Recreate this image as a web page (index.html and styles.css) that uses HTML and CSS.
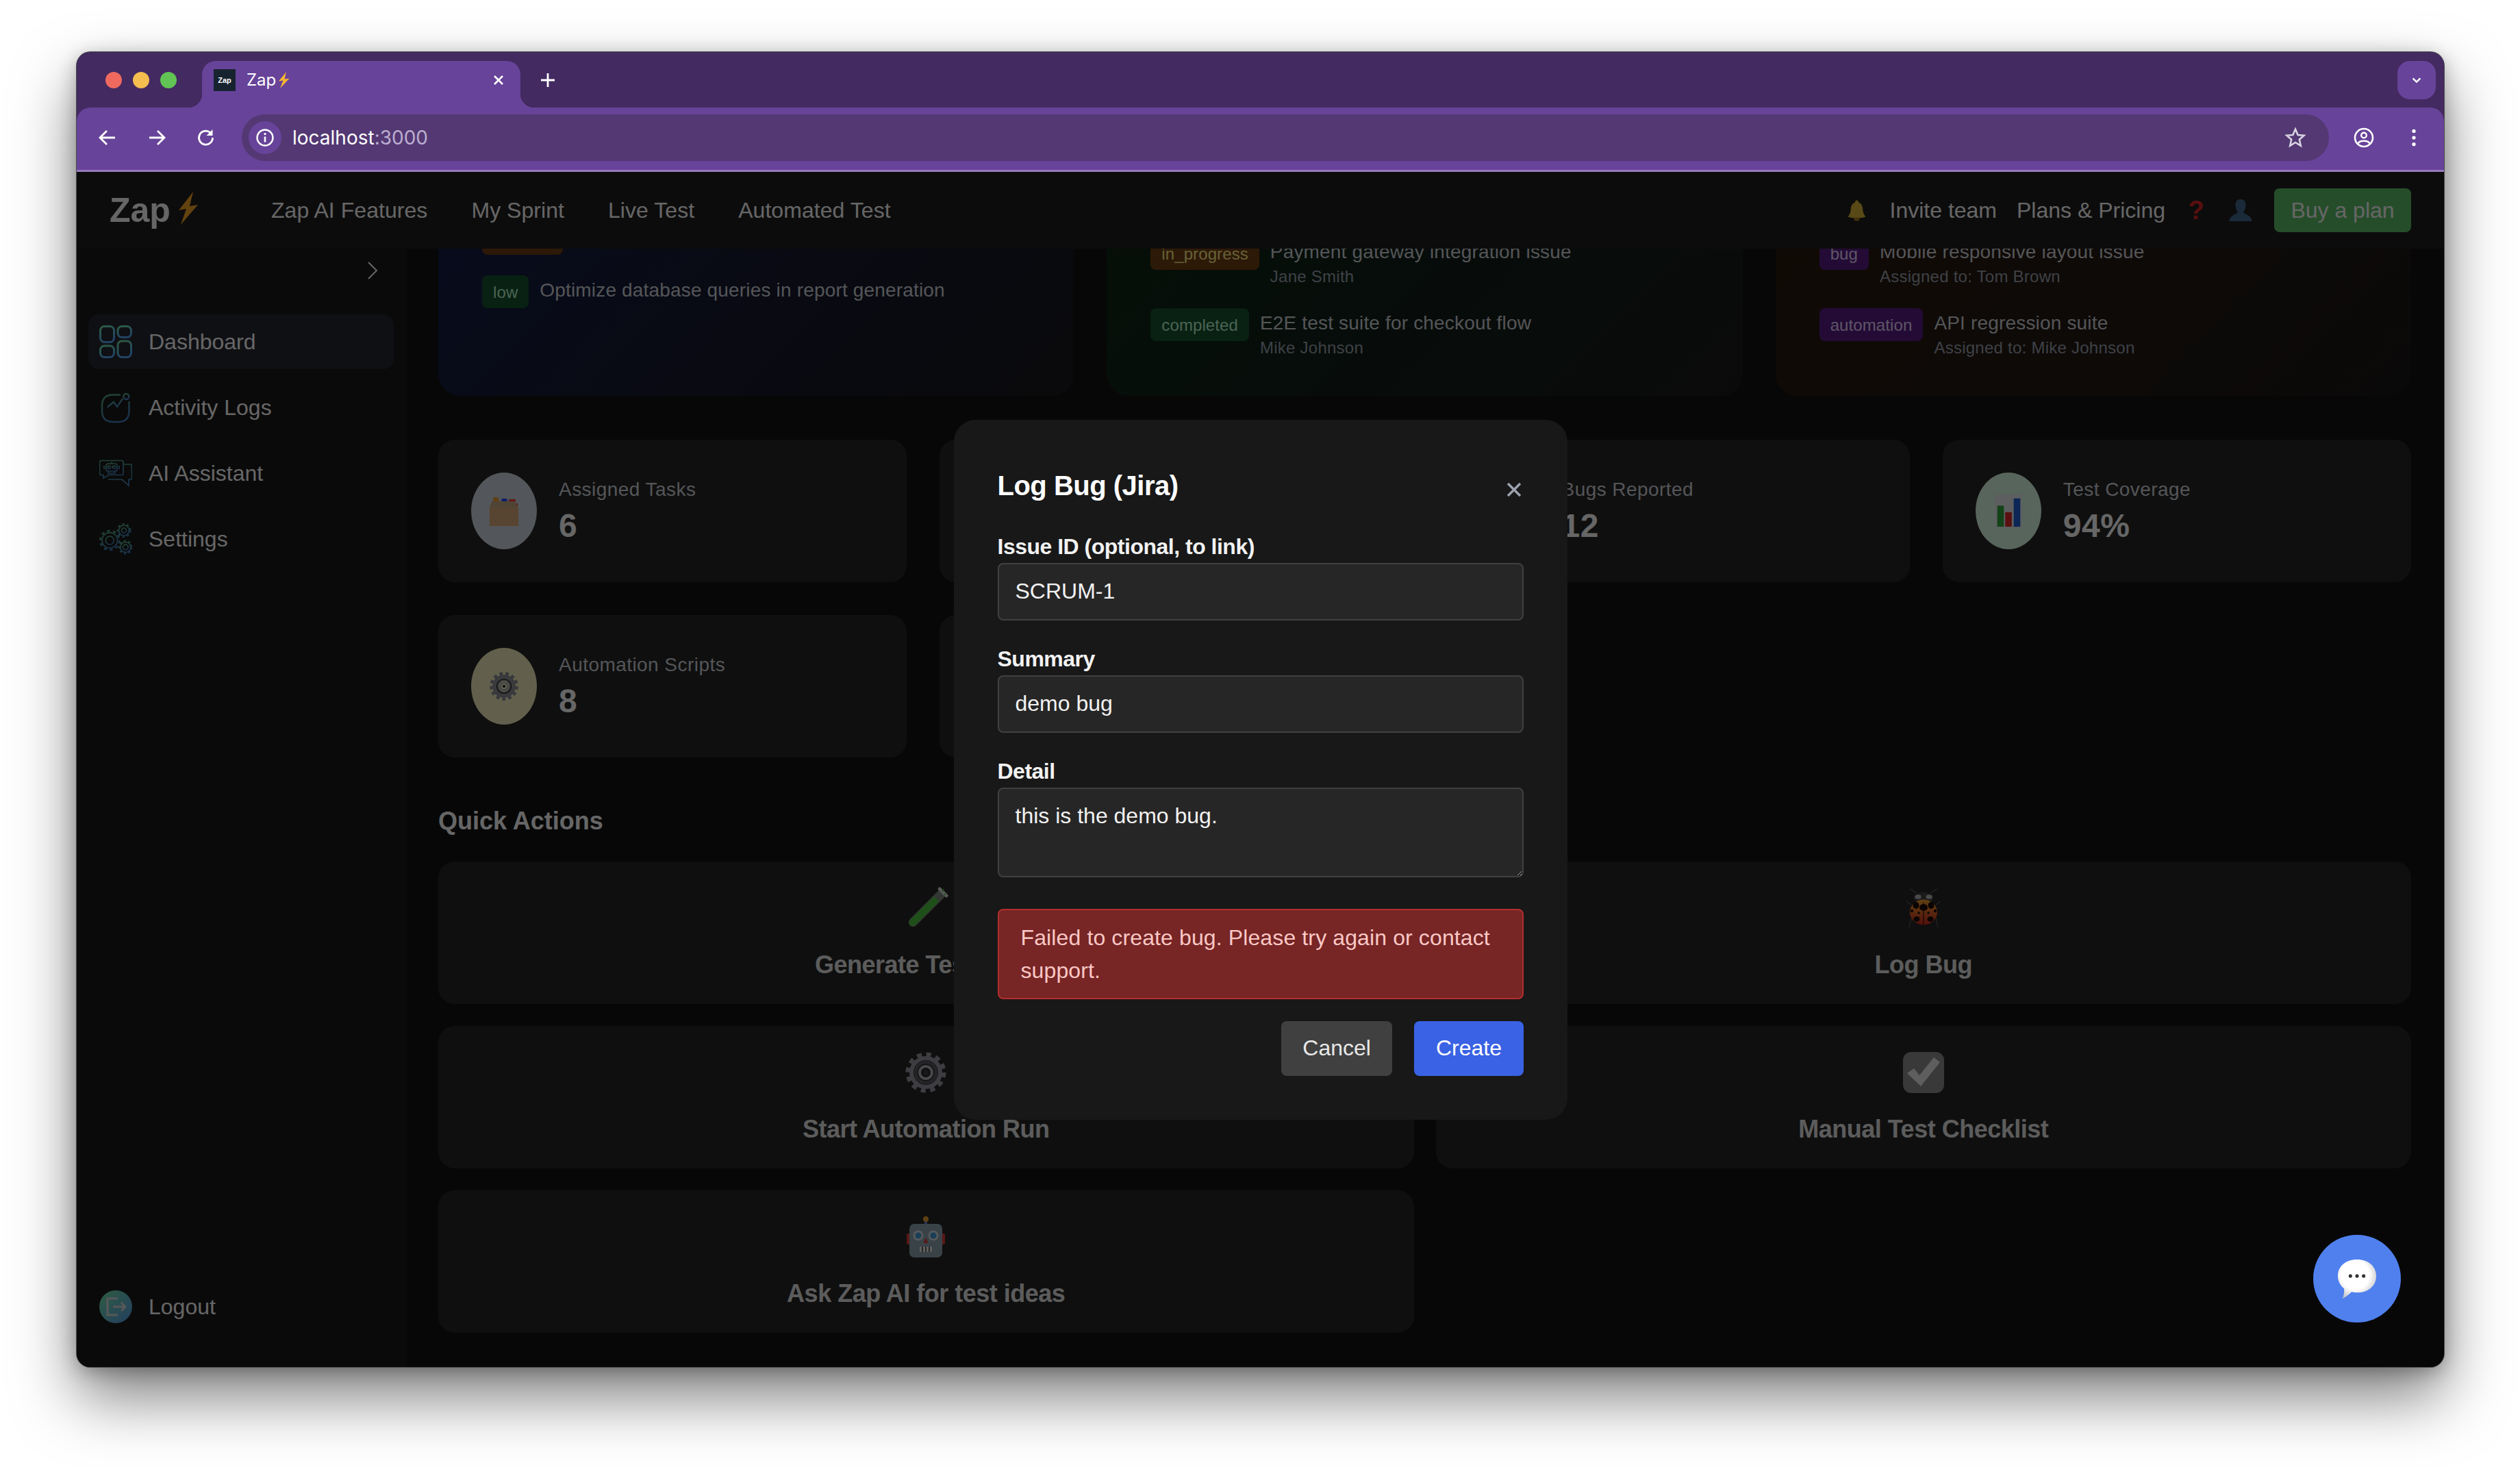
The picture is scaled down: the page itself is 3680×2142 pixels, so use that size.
FILE: index.html
```html
<!DOCTYPE html>
<html lang="en">
<head>
<meta charset="utf-8">
<title>Zap</title>
<link rel="stylesheet" href="styles.css">
</head>
<body>
<svg class="defs" width="0" height="0" aria-hidden="true">
  <defs>
    <linearGradient id="side" x1="0" y1="0" x2="0.4" y2="1">
      <stop offset="0" stop-color="#72e6a6"/>
      <stop offset="1" stop-color="#55a8fa"/>
    </linearGradient>
    <linearGradient id="bugbody" x1="0" y1="0" x2="0" y2="1">
      <stop offset="0" stop-color="#f0a030"/>
      <stop offset="1" stop-color="#d0281c"/>
    </linearGradient>
    <radialGradient id="bubble" cx="0.45" cy="0.4" r="0.62">
      <stop offset="0.6" stop-color="#ffffff"/>
      <stop offset="1" stop-color="#c4c4c8"/>
    </radialGradient>
    <linearGradient id="logoutg" x1="0" y1="0" x2="1" y2="1">
      <stop offset="0" stop-color="#72e6a6"/>
      <stop offset="1" stop-color="#5a9cf0"/>
    </linearGradient>
  </defs>
</svg>
<div class="window">
  <div class="tabstrip">
    <div class="lights">
      <span class="light light-red"></span>
      <span class="light light-yellow"></span>
      <span class="light light-green"></span>
    </div>
    <div class="tab">
      <span class="favicon">Zap</span>
      <span class="tab-title">Zap<svg class="tab-bolt" viewBox="0 0 34 48"><polygon points="24,0 2,27 15,25 6,48 33,19 19,21" fill="#f7b733"/></svg></span>
      <svg class="tab-close" viewBox="0 0 20 20"><path d="M4 4 L16 16 M16 4 L4 16" stroke="#fff" stroke-width="2.6"/></svg>
    </div>
    <svg class="tab-new" viewBox="0 0 24 24"><path d="M12 2 V22 M2 12 H22" stroke="#fff" stroke-width="2.8"/></svg>
    <div class="tab-search"><svg viewBox="0 0 20 20"><path d="M4 7 L10 13 L16 7" fill="none" stroke="#fff" stroke-width="2.6"/></svg></div>
  </div>
  <div class="toolbar">
    <svg class="tool" viewBox="0 0 32 32"><path d="M27 16 H6 M15 6 L5 16 L15 26" fill="none" stroke="#fff" stroke-width="2.8"/></svg>
    <svg class="tool" viewBox="0 0 32 32"><path d="M5 16 H26 M17 6 L27 16 L17 26" fill="none" stroke="#fff" stroke-width="2.8"/></svg>
    <svg class="tool" viewBox="0 0 32 32"><path d="M25.5 16 A10 10 0 1 1 22 8.5" fill="none" stroke="#fff" stroke-width="2.8"/><polygon points="25.5,4 25.5,13 16.5,13" fill="#fff"/></svg>
    <div class="omnibox">
      <span class="info"><svg viewBox="0 0 28 28"><circle cx="14" cy="14" r="11.5" fill="none" stroke="#fff" stroke-width="2.4"/><path d="M14 12.5 V20.5" stroke="#fff" stroke-width="2.6"/><circle cx="14" cy="8.6" r="1.7" fill="#fff"/></svg></span>
      <span class="url">localhost<span class="url-port">:3000</span></span>
      <svg class="star" viewBox="0 0 32 32"><polygon points="16,3.5 19.6,12 28.6,12.8 21.8,18.8 23.8,27.8 16,23 8.2,27.8 10.2,18.8 3.4,12.8 12.4,12" fill="none" stroke="#d9d3e2" stroke-width="2.6"/></svg>
    </div>
    <svg class="profile" viewBox="0 0 32 32"><circle cx="16" cy="16" r="13" fill="none" stroke="#fff" stroke-width="2.6"/><circle cx="16" cy="12.5" r="3.8" fill="none" stroke="#fff" stroke-width="2.4"/><path d="M7.5 24.5 C10 19.5 22 19.5 24.5 24.5" fill="none" stroke="#fff" stroke-width="2.6"/></svg>
    <svg class="kebab" viewBox="0 0 8 32"><circle cx="4" cy="5" r="3" fill="#fff"/><circle cx="4" cy="16" r="3" fill="#fff"/><circle cx="4" cy="27" r="3" fill="#fff"/></svg>
  </div>

  <div class="app">
    <header class="appnav">
      <div class="logo">Zap<svg class="logo-bolt" viewBox="0 0 34 48"><polygon points="25,0 4,27 15,25 7,48 32,19 20,21" fill="#f5a524"/></svg></div>
      <nav class="links">
        <a>Zap AI Features</a>
        <a>My Sprint</a>
        <a>Live Test</a>
        <a>Automated Test</a>
      </nav>
      <div class="nav-right">
        <svg class="bell" viewBox="0 0 32 32"><path d="M16 1.5 C18 1.5 18.6 3 18.5 4.5 C23 6 24.5 10 24.8 15 C25 20 27 23 29 25.500 C24 28 8 28 3 25.500 C5 23 7 20 7.2 15 C7.5 10 9 6 13.5 4.5 C13.4 3 14 1.5 16 1.5 Z" fill="#dcb738"/><ellipse cx="16" cy="29" rx="4" ry="2.6" fill="#a97a1c"/></svg>
        <a>Invite team</a>
        <a class="plans">Plans &amp; Pricing</a>
        <span class="help">?</span>
        <svg class="person" viewBox="0 0 34 32"><path d="M17 0 C23 0 25 5 24.5 10 C24 15 22 17 21 19 C23 22 33 23 33.5 32 H0.5 C1 23 11 22 13 19 C12 17 10 15 9.5 10 C9 5 11 0 17 0 Z" fill="#44698e"/></svg>
        <button class="buy">Buy a plan</button>
      </div>
    </header>

    <div class="body">
      <aside class="sidebar">
        <div class="collapse"><svg viewBox="0 0 16 26"><path d="M2 1 L14 13 L2 25" fill="none" stroke="#fff" stroke-width="2"/></svg></div>
        <ul class="menu">
          <li class="item item-active">
            <svg class="side-icon" viewBox="0 0 48 48"><g fill="none" stroke="url(#side)" stroke-width="3"><rect x="1.5" y="1.5" width="20" height="23" rx="6"/><rect x="27" y="1.5" width="19.5" height="16" rx="6"/><rect x="1.5" y="30" width="20" height="16.5" rx="6"/><rect x="27" y="23" width="19.5" height="23.5" rx="6"/></g></svg>
            <span>Dashboard</span>
          </li>
          <li class="item">
            <svg class="side-icon side-dim" viewBox="0 0 48 48"><g fill="none" stroke="url(#side)" stroke-width="2.4" stroke-linecap="round"><path d="M30 5.5 H20 C9 5.5 4 11 4 21 V29 C4 40 10 45 20 45 H28 C39 45 43.5 39 43.5 29 V16"/><circle cx="39.3" cy="8" r="4"/><path d="M12.5 23 L21 16 L26 23 L33.5 12"/></g></svg>
            <span>Activity Logs</span>
          </li>
          <li class="item">
            <svg class="side-icon side-dim" viewBox="0 0 48 48"><g fill="none" stroke="url(#side)" stroke-width="1.7"><path d="M3 5.5 H33 C34.5 5.5 35 6.5 35 8 V24 C35 25.5 34.5 26.5 33 26.5 H14 L6 31 V26.5 H2.5 C1 26.5 0.5 25.5 0.5 24 V8 C0.5 6.5 1 5.5 3 5.5 Z"/><path d="M35 11 H46 C47 11 47.5 12 47.5 13 V31 C47.5 32 47 33 46 33 H43 V42 L33 33 H13"/><rect x="10" y="10" width="16" height="11" rx="3"/><circle cx="14.5" cy="15" r="2"/><circle cx="21.5" cy="15" r="2"/><path d="M18 7.5 V10 M7 13 V18 M29 13 V18 M13 21 V24 H23 V21"/></g></svg>
            <span>AI Assistant</span>
          </li>
          <li class="item">
            <svg class="side-icon side-dim" viewBox="0 0 48 48"><g fill="none" stroke="url(#side)" stroke-width="1.7"><circle cx="15.3" cy="26" r="6"/><circle cx="15.3" cy="26" r="11.3"/><circle cx="15.3" cy="26" r="14" stroke-dasharray="4.2 4.6" stroke-width="2.6"/><circle cx="36" cy="11.5" r="3.5"/><circle cx="36" cy="11.5" r="7.5"/><circle cx="36" cy="11.5" r="9.4" stroke-dasharray="3.2 3.7" stroke-width="2.2"/><circle cx="38.3" cy="36" r="3.8"/><circle cx="38.3" cy="36" r="7.5"/><circle cx="38.3" cy="36" r="9.4" stroke-dasharray="3.2 3.7" stroke-width="2.2"/></g></svg>
            <span>Settings</span>
          </li>
        </ul>
        <div class="item item-logout">
          <svg class="side-icon" viewBox="0 0 48 48"><circle cx="24" cy="24" r="24" fill="url(#logoutg)"/><path d="M27 12 H12 V36 H27 M20 24 H38 M32 18 L38 24 L32 30" fill="none" stroke="#ddd" stroke-width="3"/></svg>
          <span>Logout</span>
        </div>
      </aside>

      <main class="main">
        <div class="scrolled">
          <section class="panels">
            <div class="panel panel-blue">
              <div class="task"><span class="badge badge-yellow">medium</span><div class="task-text"><p class="task-title">Add export to PDF option</p></div></div>
              <div class="task"><span class="badge badge-green">low</span><div class="task-text"><p class="task-title">Optimize database queries in report generation</p></div></div>
            </div>
            <div class="panel panel-green">
              <div class="task"><span class="badge badge-yellow">in_progress</span><div class="task-text"><p class="task-title">Payment gateway integration issue</p><p class="task-sub">Jane Smith</p></div></div>
              <div class="task"><span class="badge badge-green">completed</span><div class="task-text"><p class="task-title">E2E test suite for checkout flow</p><p class="task-sub">Mike Johnson</p></div></div>
            </div>
            <div class="panel panel-orange">
              <div class="task"><span class="badge badge-purple">bug</span><div class="task-text"><p class="task-title">Mobile responsive layout issue</p><p class="task-sub">Assigned to: Tom Brown</p></div></div>
              <div class="task"><span class="badge badge-purple">automation</span><div class="task-text"><p class="task-title">API regression suite</p><p class="task-sub">Assigned to: Mike Johnson</p></div></div>
            </div>
          </section>

          <section class="stats">
            <div class="stat">
              <span class="stat-icon stat-gray">
                <svg class="stat-svg" viewBox="0 0 44 44"><rect x="6" y="2" width="8" height="6" rx="2" fill="#f0a030"/><rect x="5" y="7" width="11" height="6" rx="2" fill="#f0a030"/><rect x="18" y="4" width="9" height="4" rx="2" fill="#2a4cff"/><rect x="18" y="10" width="9" height="4" rx="2" fill="#2a4cff"/><rect x="29" y="5" width="10" height="4" rx="1" fill="#ff3a3a"/><rect x="31" y="11" width="11" height="4" rx="1" fill="#ff3a3a"/><polygon points="4,8 38,8 43,18 1,18" fill="#c9ab86"/><rect x="1" y="17" width="42" height="27" fill="#d9ad7c"/></svg>
              </span>
              <div><p class="stat-label">Assigned Tasks</p><p class="stat-value">6</p></div>
            </div>
            <div class="stat"></div>
            <div class="stat">
              <span class="stat-icon stat-red"></span>
              <div><p class="stat-label">Bugs Reported</p><p class="stat-value">12</p></div>
            </div>
            <div class="stat">
              <span class="stat-icon stat-green">
                <svg class="stat-svg" viewBox="0 0 44 50"><rect x="2" y="0" width="40" height="50" fill="#e8eaee"/><rect x="5" y="17" width="10" height="32" fill="#2fa83a"/><rect x="17" y="27" width="10" height="22" fill="#e02a2a"/><rect x="30" y="6" width="10" height="43" fill="#2060d8"/></svg>
              </span>
              <div><p class="stat-label">Test Coverage</p><p class="stat-value">94%</p></div>
            </div>
            <div class="stat">
              <span class="stat-icon stat-yellow">
                <svg class="stat-svg" viewBox="0 0 60 60"><g fill="none"><circle cx="30" cy="30" r="25" stroke="#8d8f98" stroke-width="7" stroke-dasharray="6.5 5.5"/><circle cx="30" cy="30" r="20" stroke="#8d8f98" stroke-width="6"/><circle cx="30" cy="30" r="14" stroke="#53555c" stroke-width="5"/><circle cx="30" cy="30" r="8" stroke="#a9abb3" stroke-width="4"/><circle cx="30" cy="30" r="3" fill="#33343a"/></g></svg>
              </span>
              <div><p class="stat-label">Automation Scripts</p><p class="stat-value">8</p></div>
            </div>
            <div class="stat"></div>
          </section>

          <h2 class="section-title">Quick Actions</h2>

          <section class="actions">
            <div class="action">
              <svg class="action-icon" viewBox="0 0 60 60"><g transform="rotate(45 30 32)"><rect x="23.500" y="-5" width="13" height="70" rx="6.5" fill="#7f8a7f"/><path d="M25 10 H35 V59 A5 5 0 0 1 25 59 Z" fill="#4cc63e"/><rect x="20.500" y="-6" width="19" height="5" rx="2.500" fill="#d9dcd9"/></g><circle cx="55" cy="4" r="1.8" fill="#46c43a"/><circle cx="58" cy="10" r="1.200" fill="#46c43a"/></svg>
              <span class="action-label">Generate Test Case</span>
            </div>
            <div class="action">
              <svg class="action-icon" viewBox="0 0 60 60">
                <g fill="none" stroke="#5c5c5c" stroke-width="1.200">
                  <path d="M20 8 L10 2 M40 8 L50 2 M12 25 L5 20 M48 25 L55 20 M12 44 L9 58 M48 44 L51 58"/>
                </g>
                <ellipse cx="30" cy="15" rx="14" ry="8" fill="#454548"/>
                <ellipse cx="22" cy="13.500" rx="4.500" ry="3.200" fill="#b9b9b9"/>
                <ellipse cx="38" cy="13.500" rx="4.500" ry="3.200" fill="#b9b9b9"/>
                <ellipse cx="30" cy="36" rx="20" ry="18.500" fill="url(#bugbody)"/>
                <path d="M30 22 V54" stroke="#2a0c08" stroke-width="1.200"/>
                <g fill="#1a0a08">
                  <ellipse cx="30" cy="29" rx="6" ry="5"/>
                  <ellipse cx="19" cy="26" rx="4.500" ry="5"/>
                  <ellipse cx="41" cy="26" rx="4.500" ry="5"/>
                  <circle cx="13" cy="34" r="2.200"/>
                  <circle cx="47" cy="34" r="2.200"/>
                  <circle cx="23" cy="37" r="1.800"/>
                  <circle cx="37" cy="37" r="1.800"/>
                  <ellipse cx="20" cy="46" rx="4.500" ry="4"/>
                  <ellipse cx="40" cy="46" rx="4.500" ry="4"/>
                </g>
              </svg>
              <span class="action-label">Log Bug</span>
            </div>
            <div class="action">
              <svg class="action-icon" viewBox="0 0 60 60"><g fill="none"><circle cx="30" cy="30" r="26" stroke="#999aa3" stroke-width="7" stroke-dasharray="7 6.6"/><circle cx="30" cy="30" r="21" stroke="#999aa3" stroke-width="6"/><circle cx="30" cy="30" r="15" stroke="#5a5b63" stroke-width="5"/><circle cx="30" cy="30" r="9" stroke="#b4b5bd" stroke-width="4"/><circle cx="30" cy="30" r="4" fill="#3c3d44"/></g></svg>
              <span class="action-label">Start Automation Run</span>
            </div>
            <div class="action">
              <svg class="action-icon" viewBox="0 0 60 60"><rect x="0" y="0" width="60" height="60" rx="12" fill="#8e8e8e"/><polygon points="6,31 16,24 24,34 45,8 54,15 26,50" fill="#ececec"/></svg>
              <span class="action-label">Manual Test Checklist</span>
            </div>
            <div class="action">
              <svg class="action-icon" viewBox="0 0 60 60"><rect x="28" y="4" width="4" height="8" fill="#6a7fd0"/><circle cx="30" cy="4" r="4" fill="#f0a030"/><rect x="2" y="25" width="6" height="16" rx="2" fill="#e03a3a"/><rect x="52" y="25" width="6" height="16" rx="2" fill="#e03a3a"/><rect x="6" y="11" width="48" height="49" rx="7" fill="#8fa6b2"/><circle cx="19" cy="28" r="7.5" fill="#d6dde0"/><circle cx="41" cy="28" r="7.5" fill="#d6dde0"/><circle cx="19" cy="28" r="4.5" fill="#3f9bd8"/><circle cx="41" cy="28" r="4.5" fill="#3f9bd8"/><polygon points="30,31 26.5,39 33.5,39" fill="#e03a3a"/><rect x="21" y="44" width="18" height="8" rx="2" fill="#f0f0f0"/><path d="M25 44 V52 M30 44 V52 M35 44 V52" stroke="#333" stroke-width="1.5"/></svg>
              <span class="action-label">Ask Zap AI for test ideas</span>
            </div>
          </section>
        </div>
      </main>
    </div>

    <div class="overlay">
      <div class="modal">
        <div class="modal-head">
          <h3 class="modal-title">Log Bug (Jira)</h3>
          <svg class="modal-close" viewBox="0 0 24 24"><path d="M3 3 L21 21 M21 3 L3 21" stroke="#9ca3af" stroke-width="3.400"/></svg>
        </div>
        <label class="field-label">Issue ID (optional, to link)</label>
        <input class="field" type="text" value="SCRUM-1">
        <label class="field-label">Summary</label>
        <input class="field" type="text" value="demo bug">
        <label class="field-label">Detail</label>
        <textarea class="field field-area">this is the demo bug.</textarea>
        <div class="error">Failed to create bug. Please try again or contact support.</div>
        <div class="modal-actions">
          <button class="btn btn-cancel">Cancel</button>
          <button class="btn btn-create">Create</button>
        </div>
      </div>
    </div>

    <button class="fab"><svg viewBox="0 0 60 60"><path d="M30 1 C47 1 59 11 59 26 C59 41 47 51 30 51 C27 51 24.500 50.600 22 50 C18 54 13 58 8 60 C10 56 11 50 10.500 45 C4.500 40 1 33 1 26 C1 11 13 1 30 1 Z" fill="url(#bubble)"/><circle cx="20" cy="26" r="2.600" fill="#333"/><circle cx="30" cy="26" r="2.600" fill="#333"/><circle cx="40" cy="26" r="2.600" fill="#333"/></svg></button>
  </div>
</div>
</body>
</html>
```

FILE: styles.css
```css
* { box-sizing: border-box; }
html, body { margin: 0; padding: 0; }
body {
  width: 3680px;
  height: 2142px;
  overflow: hidden;
  background: #ffffff;
  font-family: "Liberation Sans", Arial, sans-serif;
  color: #fff;
}
.defs { position: absolute; }
p, h2, h3, ul { margin: 0; padding: 0; }
ul { list-style: none; }

.window {
  width: 3457px;
  height: 1920px;
  margin: 76px 0 0 112px;
  border-radius: 20px;
  overflow: hidden;
  display: flex;
  flex-direction: column;
  background: #432a61;
  box-shadow: 0 0 0 1px #4c4c4c, 0 44px 90px rgba(0, 0, 0, 0.5), 0 6px 28px rgba(0, 0, 0, 0.28);
}

/* browser chrome */
.tabstrip {
  height: 81px;
  flex: none;
  display: flex;
  align-items: flex-end;
  background: #432a61;
  padding-left: 42px;
}
.lights { display: flex; gap: 16px; align-self: flex-start; margin-top: 29px; }
.light { width: 24px; height: 24px; border-radius: 50%; }
.light-red { background: #f0695f; }
.light-yellow { background: #f6bd4f; }
.light-green { background: #61c454; }

.tab {
  position: relative;
  width: 465px;
  height: 68px;
  margin-left: 37px;
  padding: 12px 20px 0 17px;
  display: flex;
  align-items: flex-start;
  background: #674399;
  border-radius: 20px 20px 0 0;
}
.tab::before, .tab::after {
  content: "";
  position: absolute;
  bottom: 0;
  width: 20px;
  height: 20px;
}
.tab::before { left: -20px; background: radial-gradient(circle at 0 0, transparent 20px, #674399 20.5px); }
.tab::after { right: -20px; background: radial-gradient(circle at 100% 0, transparent 20px, #674399 20.5px); }
.favicon {
  width: 32px;
  height: 32px;
  background: #172430;
  font-size: 11px;
  font-weight: bold;
  line-height: 32px;
  text-align: center;
  color: #fff;
  flex: none;
}
.tab-title {
  margin-left: 16px;
  font: 24px/32px Inter, "Liberation Sans", sans-serif;
  display: flex;
  align-items: center;
}
.tab-bolt { width: 17px; height: 24px; margin-left: 3px; }
.tab-close { width: 20px; height: 20px; margin: 6px 2px 0 auto; }
.tab-new { width: 24px; height: 24px; margin: 0 0 28px 28px; }
.tab-search {
  width: 56px;
  height: 56px;
  margin: 0 12px 12px auto;
  border-radius: 18px;
  background: #674399;
  display: flex;
  align-items: center;
  justify-content: center;
}
.tab-search svg { width: 18px; height: 18px; }

.toolbar {
  height: 94px;
  flex: none;
  display: flex;
  align-items: center;
  padding: 0 0 3px 29px;
  background: #674399;
  border-bottom: 3px solid #9679bd;
  border-radius: 20px 20px 0 0;
}
.tool { width: 32px; height: 32px; flex: none; margin-right: 40px; }
.omnibox {
  width: 3048px;
  height: 68px;
  margin-left: -4px;
  padding: 0 33px 0 10px;
  border-radius: 34px;
  background: #533873;
  display: flex;
  align-items: center;
  flex: none;
}
.info {
  width: 48px;
  height: 48px;
  border-radius: 50%;
  background: #674399;
  display: flex;
  align-items: center;
  justify-content: center;
}
.info svg { width: 28px; height: 28px; }
.url { margin-left: 16px; font: 28px Inter, "Liberation Sans", sans-serif; color: #fff; }
.url-port { color: #bcaed0; }
.star { width: 32px; height: 32px; margin-left: auto; }
.profile { width: 32px; height: 32px; margin-left: 35px; flex: none; }
.kebab { width: 8px; height: 28px; margin-left: 53px; flex: none; }

/* app */
.app {
  position: relative;
  flex: 1;
  min-height: 0;
  display: flex;
  flex-direction: column;
  background: #121212;
}
.appnav {
  height: 112px;
  flex: none;
  display: flex;
  align-items: center;
  padding: 0 48px 0 48px;
  background: #1f1f1f;
}
.logo {
  width: 236px;
  display: flex;
  align-items: center;
  font-size: 50px;
  font-weight: bold;
  color: #fff;
}
.logo-bolt { width: 34px; height: 48px; margin-left: 8px; margin-top: -6px; }
.links { display: flex; gap: 64px; font-size: 32px; letter-spacing: 0.05px; color: #fff; }
.nav-right {
  margin-left: auto;
  display: flex;
  align-items: center;
  gap: 32px;
  font-size: 32px;
  color: #fff;
}
.bell { width: 33px; height: 32px; }
.plans { margin-left: -3px; }
.help { width: 32px; margin-left: -3px; text-align: center; color: #dc2626; font-weight: bold; font-size: 38px; }
.person { width: 34px; height: 32px; }
.buy {
  width: 200px;
  height: 64px;
  border: 0;
  border-radius: 8px;
  background: #5fc069;
  color: #fff;
  font: 32px "Liberation Sans", Arial, sans-serif;
}

.body { flex: 1; min-height: 0; display: flex; }
.sidebar {
  width: 482px;
  flex: none;
  display: flex;
  flex-direction: column;
  padding: 0 19px 48px 17px;
  background: #1a1a1a;
  color: #fff;
}
.collapse {
  height: 64px;
  margin-bottom: 32px;
  display: flex;
  align-items: center;
  justify-content: flex-end;
  padding-right: 23px;
}
.collapse svg { width: 16px; height: 26px; }
.menu { display: flex; flex-direction: column; gap: 16px; }
.item {
  height: 80px;
  display: flex;
  align-items: center;
  gap: 24px;
  padding: 0 16px;
  border-radius: 16px;
  font-size: 32px;
}
.item-active { background: #262a33; }
.item-logout { margin-top: auto; }
.side-icon { width: 48px; height: 48px; flex: none; }
.side-dim { opacity: 0.72; }

.main { flex: 1; min-width: 0; overflow: hidden; padding: 0 48px 0 46px; }
.scrolled { margin-top: -101px; }

.panels { display: grid; grid-template-columns: repeat(3, 1fr); gap: 48px; }
.panel {
  display: flex;
  flex-direction: column;
  gap: 30px;
  padding: 62px 64px 54px;
  border-radius: 32px;
}
.panel-blue { background: linear-gradient(135deg, #141d4a 0%, #171b30 50%, #19191e 100%); }
.panel-green { background: linear-gradient(135deg, #0c2914 0%, #12201a 50%, #1a1b1a 100%); padding-top: 84px; }
.panel-orange { background: linear-gradient(135deg, #2a1a0c 0%, #241b14 50%, #1a1717 100%); padding-top: 84px; }
.task { display: flex; gap: 16px; align-items: flex-start; }
.badge {
  height: 48px;
  flex: none;
  padding: 0 16px;
  border-radius: 8px;
  font-size: 24px;
  letter-spacing: 0.1px;
  line-height: 50px;
}
.badge-yellow { background: #713f12; color: #fef08a; }
.badge-green { background: #14532d; color: #bbf7d0; }
.badge-purple { background: #581c87; color: #e9d5ff; }
.task-title { padding-top: 2px; font-size: 28px; line-height: 40px; letter-spacing: 0.17px; color: #d1d5db; }
.task-sub { font-size: 24px; line-height: 32px; letter-spacing: 0.25px; color: #9ca3af; }

.stats {
  display: grid;
  grid-template-columns: repeat(4, 1fr);
  gap: 48px;
  margin-top: 64px;
}
.stat {
  height: 208px;
  padding: 48px;
  display: flex;
  align-items: center;
  gap: 32px;
  border-radius: 24px;
  background: #262626;
}
.stat-icon {
  width: 96px;
  height: 112px;
  flex: none;
  border-radius: 50%;
  display: flex;
  align-items: center;
  justify-content: center;
}
.stat-gray { background: #cfd6e0; }
.stat-red { background: #fee2e2; }
.stat-green { background: #dcfce7; }
.stat-yellow { background: #f6f1bd; }
.stat-svg { width: 44px; height: 48px; }
.stat-label { margin: 2px 0 1px; font-size: 28px; line-height: 40px; letter-spacing: 0.45px; color: #d1d5db; }
.stat-value { font-size: 48px; line-height: 64px; letter-spacing: 0.5px; font-weight: bold; color: #fff; }

.section-title {
  margin: 69px 0 35px;
  font-size: 36px;
  line-height: 48px;
  font-weight: bold;
  color: #fff;
}
.actions { display: grid; grid-template-columns: repeat(2, 1fr); gap: 32px; }
.action {
  height: 208px;
  padding-top: 38px;
  display: flex;
  flex-direction: column;
  align-items: center;
  border-radius: 24px;
  background: #262626;
}
.action-icon { width: 60px; height: 60px; flex: none; overflow: visible; }
.action-label {
  margin-top: 29px;
  font-size: 36px;
  line-height: 48px;
  letter-spacing: -0.5px;
  font-weight: bold;
  color: #e5e5e5;
}

/* dialog */
.overlay {
  position: absolute;
  inset: 0;
  display: flex;
  align-items: center;
  justify-content: center;
  background: rgba(0, 0, 0, 0.6);
}
.modal {
  width: 896px;
  padding: 64px;
  border-radius: 32px;
  background: #181818;
  display: flex;
  flex-direction: column;
}
.modal-head {
  height: 66px;
  margin-bottom: 31px;
  display: flex;
  align-items: center;
  justify-content: space-between;
}
.modal-title { font-size: 40px; letter-spacing: -0.5px; font-weight: bold; color: #fff; }
.modal-close { width: 24px; height: 24px; margin: 10px 2px 0 0; }
.field-label {
  font-size: 32px;
  line-height: 48px;
  font-weight: bold;
  letter-spacing: -0.5px;
  color: #f2f2f2;
}
.field {
  display: block;
  width: 100%;
  height: 84px;
  margin-bottom: 32px;
  padding: 0 24px;
  border: 2px solid #404040;
  border-radius: 8px;
  background: #262626;
  color: #f2f2f2;
  font: 32px "Liberation Sans", Arial, sans-serif;
  outline: none;
}
.field-area { height: 131px; margin-bottom: 46px; padding: 19px 24px; line-height: 40px; }
.error {
  padding: 16px 32px;
  border: 2px solid #b32d2d;
  border-radius: 8px;
  background: #772525;
  color: #fac8c5;
  font-size: 32px;
  line-height: 48px;
  letter-spacing: 0.12px;
}
.modal-actions { display: flex; justify-content: flex-end; gap: 32px; margin-top: 32px; }
.btn {
  height: 80px;
  padding: 0 31.5px;
  border: 0;
  border-radius: 8px;
  color: #fff;
  font: 32px "Liberation Sans", Arial, sans-serif;
}
.btn-cancel { background: #404040; color: #e8e8e8; }
.btn-create { background: #3a62e4; }

.fab {
  position: absolute;
  right: 63px;
  bottom: 65px;
  width: 128px;
  height: 128px;
  padding: 0;
  border: 0;
  border-radius: 50%;
  background: #4f80ee;
  display: flex;
  align-items: center;
  justify-content: center;
}
.fab svg { width: 58px; height: 58px; }
```
